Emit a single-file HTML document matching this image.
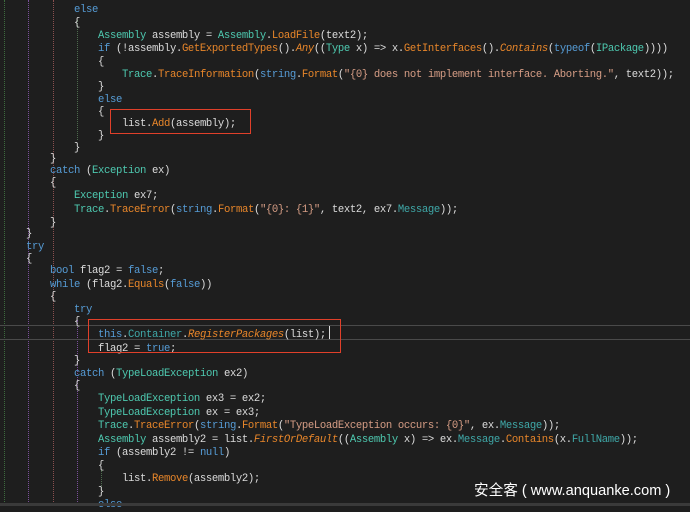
<!DOCTYPE html>
<html><head><meta charset="utf-8"><style>
body{margin:0;width:690px;height:506px;background:#1e1e1e;overflow:hidden;position:relative;font-family:"Liberation Mono",monospace;font-size:10.6px;letter-spacing:-0.36px;color:#dcdcdc}
.c{position:absolute;left:26px;top:3px}
.l{position:absolute;left:0;height:14px;line-height:14px;white-space:pre}
.k{color:#569cd6}.t{color:#4ec9b0}.m{color:#e8862a}.i{color:#e8862a;font-style:italic}.s{color:#d69d85}.p{color:#3fa8a8}
.g{position:absolute;top:0;height:506px;border-left:1px dotted}
.box{position:absolute;border:1.5px solid #e0402a}
.hl{position:absolute;left:0;width:690px;height:0;border-top:1px solid #4a4a4a}
.wm{position:absolute;left:474px;top:479px;font-family:"Liberation Sans","Noto Sans CJK SC",sans-serif;font-size:14.6px;letter-spacing:0;color:#fff;white-space:pre}
</style></head><body>
<div class="g" style="left:4px;border-color:#3d6b3d"></div>
<div class="g" style="left:28px;border-color:#7a4f9a"></div>
<div class="g" style="left:53px;border-color:#8a4f4f"></div>
<div class="g" style="left:77px;border-color:#4d6b4d;top:20px;height:120px"></div>
<div class="g" style="left:77px;border-color:#7a4f9a;top:320px;height:186px"></div>
<div class="g" style="left:101px;border-color:#4d6b4d;top:470px;height:20px"></div>
<div class="hl" style="top:325px"></div><div class="hl" style="top:339px"></div>
<div class="c">
<div class="l" style="top:0px">        <span class="k">else</span></div>
<div class="l" style="top:13px">        {</div>
<div class="l" style="top:26px">            <span class="t">Assembly</span> assembly = <span class="t">Assembly</span>.<span class="m">LoadFile</span>(text2);</div>
<div class="l" style="top:39px">            <span class="k">if</span> (!assembly.<span class="m">GetExportedTypes</span>().<span class="i">Any</span>((<span class="t">Type</span> x) => x.<span class="m">GetInterfaces</span>().<span class="i">Contains</span>(<span class="k">typeof</span>(<span class="t">IPackage</span>))))</div>
<div class="l" style="top:52px">            {</div>
<div class="l" style="top:65px">                <span class="t">Trace</span>.<span class="m">TraceInformation</span>(<span class="k">string</span>.<span class="m">Format</span>(<span class="s">"{0} does not implement interface. Aborting."</span>, text2));</div>
<div class="l" style="top:77px">            }</div>
<div class="l" style="top:90px">            <span class="k">else</span></div>
<div class="l" style="top:102px">            {</div>
<div class="l" style="top:114px">                list.<span class="m">Add</span>(assembly);</div>
<div class="l" style="top:126px">            }</div>
<div class="l" style="top:138px">        }</div>
<div class="l" style="top:149px">    }</div>
<div class="l" style="top:161px">    <span class="k">catch</span> (<span class="t">Exception</span> ex)</div>
<div class="l" style="top:173px">    {</div>
<div class="l" style="top:186px">        <span class="t">Exception</span> ex7;</div>
<div class="l" style="top:200px">        <span class="t">Trace</span>.<span class="m">TraceError</span>(<span class="k">string</span>.<span class="m">Format</span>(<span class="s">"{0}: {1}"</span>, text2, ex7.<span class="p">Message</span>));</div>
<div class="l" style="top:213px">    }</div>
<div class="l" style="top:224px">}</div>
<div class="l" style="top:237px"><span class="k">try</span></div>
<div class="l" style="top:249px">{</div>
<div class="l" style="top:261px">    <span class="k">bool</span> flag2 = <span class="k">false</span>;</div>
<div class="l" style="top:275px">    <span class="k">while</span> (flag2.<span class="m">Equals</span>(<span class="k">false</span>))</div>
<div class="l" style="top:287px">    {</div>
<div class="l" style="top:300px">        <span class="k">try</span></div>
<div class="l" style="top:312px">        {</div>
<div class="l" style="top:325px">            <span class="k">this</span>.<span class="p">Container</span>.<span class="i">RegisterPackages</span>(list);</div>
<div class="l" style="top:339px">            flag2 = <span class="k">true</span>;</div>
<div class="l" style="top:351px">        }</div>
<div class="l" style="top:364px">        <span class="k">catch</span> (<span class="t">TypeLoadException</span> ex2)</div>
<div class="l" style="top:376px">        {</div>
<div class="l" style="top:389px">            <span class="t">TypeLoadException</span> ex3 = ex2;</div>
<div class="l" style="top:403px">            <span class="t">TypeLoadException</span> ex = ex3;</div>
<div class="l" style="top:416px">            <span class="t">Trace</span>.<span class="m">TraceError</span>(<span class="k">string</span>.<span class="m">Format</span>(<span class="s">"TypeLoadException occurs: {0}"</span>, ex.<span class="p">Message</span>));</div>
<div class="l" style="top:430px">            <span class="t">Assembly</span> assembly2 = list.<span class="i">FirstOrDefault</span>((<span class="t">Assembly</span> x) => ex.<span class="p">Message</span>.<span class="m">Contains</span>(x.<span class="p">FullName</span>));</div>
<div class="l" style="top:443px">            <span class="k">if</span> (assembly2 != <span class="k">null</span>)</div>
<div class="l" style="top:456px">            {</div>
<div class="l" style="top:469px">                list.<span class="m">Remove</span>(assembly2);</div>
<div class="l" style="top:482px">            }</div>
<div class="l" style="top:495px">            <span class="k">else</span></div>
</div>
<div class="box" style="left:110px;top:109px;width:139px;height:23px"></div>
<div class="box" style="left:88px;top:319px;width:251px;height:32px"></div>
<div style="position:absolute;left:329px;top:326px;width:1px;height:13px;background:#ddd"></div>
<div class="wm">安全客 ( www.anquanke.com )</div>
<div style="position:absolute;left:0;top:503px;width:690px;height:3px;background:#3a3a3a"></div>
</body></html>
